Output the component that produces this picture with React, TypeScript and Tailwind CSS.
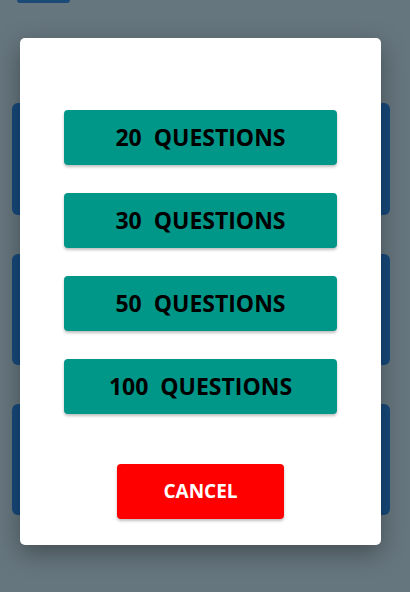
export default function App() {
  const items = ["20", "30", "50", "100"];
  return (
    <div className="relative h-[592px] w-[410px] overflow-hidden bg-[#66767e]" style={{ fontFamily: '"Open Sans", "Noto Sans", sans-serif' }}>
      <div className="ml-[17px] h-[3px] w-[53px] rounded-b-[3px] bg-[#1c4a78]" />
      <div className="ml-[12px] mt-[100px] flex w-[378px] flex-col gap-[39px]">
        <div className="h-[112px] rounded-[6px] bg-[#17497c]" />
        <div className="h-[111px] rounded-[6px] bg-[#17497c]" />
        <div className="h-[111px] rounded-[6px] bg-[#17497c]" />
      </div>
      <div className="absolute left-[20px] top-[38px] flex w-[361px] flex-col items-center rounded-[5px] bg-white pb-[26px] pt-[72px] shadow-[0_8px_24px_rgba(0,0,0,0.35)]">
        <div className="flex flex-col gap-[28px]">
          {items.map((n) => (
            <div key={n} className="flex h-[55px] w-[273px] items-center justify-center rounded-[4px] bg-[#009688] text-[23px] font-bold text-black shadow-[0_2px_3px_rgba(0,0,0,0.25)] whitespace-pre">
              {n + "  QUESTIONS"}
            </div>
          ))}
        </div>
        <div className="mt-[50px] flex h-[55px] w-[167px] items-center justify-center rounded-[4px] bg-[#ff0000] text-[19px] font-bold text-white shadow-[0_2px_3px_rgba(0,0,0,0.25)]">
          CANCEL
        </div>
      </div>
    </div>
  );
}
